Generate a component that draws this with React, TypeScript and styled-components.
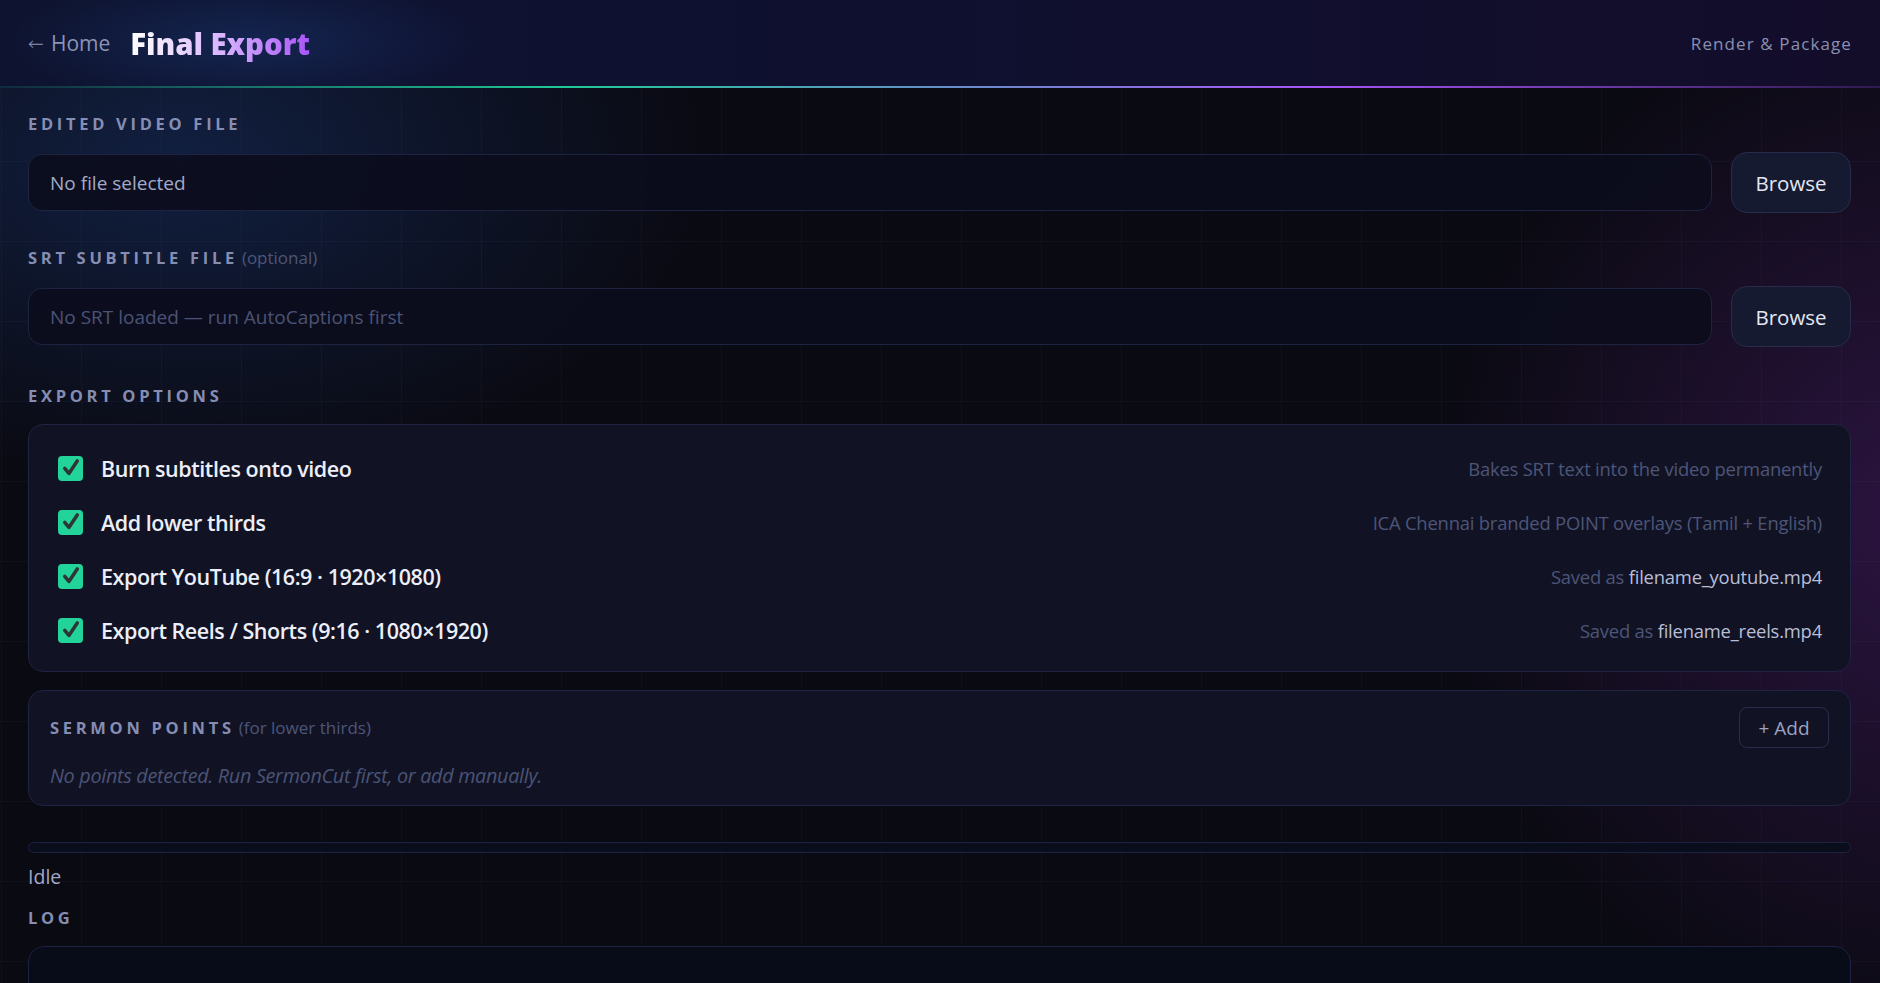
import styled, { createGlobalStyle } from "styled-components";

const GlobalStyle = createGlobalStyle`
  * {
    box-sizing: border-box;
  }
  body {
    margin: 0;
    background: #0a0a13;
    font-family: "Open Sans", "Noto Sans", sans-serif;
    color: #e6e8f4;
  }
`;

const Page = styled.div`
  min-height: 100vh;
  background-color: #0a0a12;
  background-image: linear-gradient(rgba(90, 100, 170, 0.07) 1px, transparent 1px),
    linear-gradient(90deg, rgba(90, 100, 170, 0.07) 1px, transparent 1px),
    radial-gradient(ellipse 760px 460px at 180px 160px, rgba(24, 52, 110, 0.5), transparent 70%),
    radial-gradient(ellipse 700px 760px at 1920px 520px, rgba(78, 30, 110, 0.5), transparent 70%);
  background-size: 80px 80px, 80px 80px, 100% 100%, 100% 100%;
  background-position: 0 1px, 1px 0, 0 0, 0 0;
`;

const Header = styled.header`
  height: 88px;
  display: flex;
  align-items: center;
  justify-content: space-between;
  padding: 0 28px 2px;
  position: relative;
  background: radial-gradient(ellipse 320px 90px at 250px 42px, rgba(30, 70, 140, 0.35), transparent 75%),
    linear-gradient(90deg, #0e1430 0%, #0f1030 45%, #130d2a 100%);

  &::after {
    content: "";
    position: absolute;
    left: 0;
    right: 0;
    bottom: 0;
    height: 2px;
    background: linear-gradient(
      90deg,
      rgba(32, 201, 151, 0.12) 0%,
      #20c997 30%,
      #a855f7 70%,
      rgba(168, 85, 247, 0.18) 100%
    );
  }
`;

const HeaderLeft = styled.div`
  display: flex;
  align-items: center;
  gap: 20px;
`;

const BackLink = styled.a`
  display: flex;
  align-items: center;
  gap: 7px;
  font-size: 21px;
  color: #8c93b6;
  text-decoration: none;
  cursor: pointer;
`;

const Arrow = styled.span`
  font-family: "DejaVu Sans", sans-serif;
  font-size: 19px;
  font-weight: 300;
`;

const Title = styled.h1`
  margin: 0;
  font-size: 29.5px;
  font-weight: 800;
  letter-spacing: -0.1px;
  background: linear-gradient(90deg, #ffffff 0%, #d9b6fd 50%, #a855f7 100%);
  -webkit-background-clip: text;
  background-clip: text;
  color: transparent;
`;

const HeaderRight = styled.div`
  font-size: 17px;
  letter-spacing: 1.1px;
  color: #8a90b2;
`;

const Main = styled.main`
  display: flex;
  flex-direction: column;
  padding: 0 29px 0 28px;
`;

const Label = styled.div<{ $top: number }>`
  margin-top: ${({ $top }) => $top}px;
  height: 20px;
  line-height: 20px;
  font-size: 16.5px;
  font-weight: 700;
  letter-spacing: 3.7px;
  text-transform: uppercase;
  color: #868db2;
  white-space: nowrap;
`;

const Hint = styled.span`
  margin-left: 4px;
  font-size: 17px;
  font-weight: 400;
  letter-spacing: 0;
  text-transform: none;
  color: #4d5579;
`;

const FileRow = styled.div`
  margin-top: 18px;
  display: flex;
  align-items: center;
  gap: 19px;
  height: 61px;
`;

const FileField = styled.div<{ $empty?: boolean }>`
  flex: 1;
  height: 57px;
  display: flex;
  align-items: center;
  padding: 0 21px;
  border: 1px solid #1d2340;
  border-radius: 14px;
  background: rgba(11, 12, 28, 0.88);
  font-size: 19px;
  color: ${({ $empty }) => ($empty ? "#4b5375" : "#a3aac8")};
`;

const BrowseButton = styled.button`
  width: 120px;
  height: 61px;
  border: 1px solid #262c4a;
  border-radius: 16px;
  background: #161a30;
  color: #e4e6f2;
  font-family: inherit;
  font-size: 20.5px;
  cursor: pointer;
`;

const Card = styled.div<{ $top: number }>`
  margin-top: ${({ $top }) => $top}px;
  border: 1px solid #1e2442;
  border-radius: 15px;
  background: #111324;
`;

const OptionList = styled(Card)`
  padding: 16px 28px 14px 29px;
`;

const OptionRow = styled.label`
  height: 54px;
  display: flex;
  align-items: center;
  cursor: pointer;
`;

const CheckBox = styled.span`
  width: 25px;
  height: 25px;
  flex: none;
  display: flex;
  align-items: center;
  justify-content: center;
  border-radius: 4px;
  background: #22d39a;
`;

const OptionName = styled.span`
  margin-left: 18px;
  font-size: 21.5px;
  font-weight: 600;
  color: #eceef8;
  letter-spacing: -0.45px;
`;

const OptionNote = styled.span`
  margin-left: auto;
  font-size: 18.4px;
  color: #4d5578;
  letter-spacing: -0.2px;
`;

const FileName = styled.span`
  color: #b9bed8;
`;

const PointsCard = styled(Card)`
  padding: 16px 21px 17px 21px;
`;

const PointsHead = styled.div`
  height: 41px;
  display: flex;
  align-items: center;
  justify-content: space-between;
`;

const AddButton = styled.button`
  width: 90px;
  height: 41px;
  border: 1px solid #282e4c;
  border-radius: 8px;
  background: transparent;
  color: #9ba2c2;
  font-family: inherit;
  font-size: 19px;
  cursor: pointer;
`;

const EmptyNote = styled.div`
  margin-top: 16px;
  line-height: 24px;
  font-size: 19.8px;
  font-style: italic;
  color: #4b5376;
  letter-spacing: -0.3px;
`;

const Progress = styled.div`
  margin-top: 36px;
  height: 11px;
  border: 1px solid #1c2240;
  border-radius: 6px;
  background: #0a0d1c;
`;

const Status = styled.div`
  margin-top: 12px;
  line-height: 24px;
  font-size: 19.5px;
  color: #a2a8c4;
`;

const LogBox = styled.div`
  margin-top: 18px;
  height: 160px;
  border: 1px solid #1c2240;
  border-radius: 16px;
  background: #080b18;
`;

const Check = () => (
  <svg width="20" height="20" viewBox="0 0 24 24" fill="none">
    <path d="M4.5 12.5l5 6L19.5 3.5" stroke="#2f3537" strokeWidth="4.2" strokeLinecap="round" strokeLinejoin="round" />
  </svg>
);

const options = [
  { name: "Burn subtitles onto video", note: "Bakes SRT text into the video permanently" },
  { name: "Add lower thirds", note: "ICA Chennai branded POINT overlays (Tamil + English)" },
  { name: "Export YouTube (16:9 · 1920×1080)", note: "Saved as", file: "filename_youtube.mp4" },
  { name: "Export Reels / Shorts (9:16 · 1080×1920)", note: "Saved as", file: "filename_reels.mp4" },
];

const App = () => {
  return (
    <Page>
      <GlobalStyle />
      <Header>
        <HeaderLeft>
          <BackLink>
            <Arrow>←</Arrow>Home
          </BackLink>
          <Title>Final Export</Title>
        </HeaderLeft>
        <HeaderRight>Render &amp; Package</HeaderRight>
      </Header>
      <Main>
        <Label $top={26}>Edited Video File</Label>
        <FileRow>
          <FileField>No file selected</FileField>
          <BrowseButton>Browse</BrowseButton>
        </FileRow>

        <Label $top={35}>
          SRT Subtitle File<Hint>(optional)</Hint>
        </Label>
        <FileRow>
          <FileField $empty>No SRT loaded — run AutoCaptions first</FileField>
          <BrowseButton>Browse</BrowseButton>
        </FileRow>

        <Label $top={39}>Export Options</Label>
        <OptionList $top={18}>
          {options.map((o) => (
            <OptionRow key={o.name}>
              <CheckBox>
                <Check />
              </CheckBox>
              <OptionName>{o.name}</OptionName>
              <OptionNote>
                {o.note}
                {o.file && <FileName> {o.file}</FileName>}
              </OptionNote>
            </OptionRow>
          ))}
        </OptionList>

        <PointsCard $top={18}>
          <PointsHead>
            <Label $top={0}>
              Sermon Points<Hint>(for lower thirds)</Hint>
            </Label>
            <AddButton>+ Add</AddButton>
          </PointsHead>
          <EmptyNote>No points detected. Run SermonCut first, or add manually.</EmptyNote>
        </PointsCard>

        <Progress />
        <Status>Idle</Status>
        <Label $top={19}>Log</Label>
        <LogBox />
      </Main>
    </Page>
  );
};

export default App;
